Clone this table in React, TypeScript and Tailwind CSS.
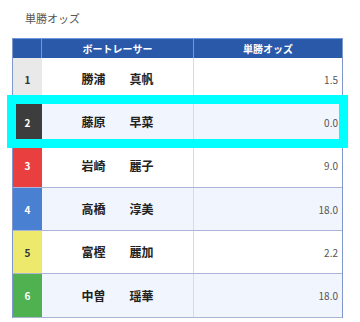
type Racer = {
	no: number
	name: string
	odds: string
	cell: string
}

const racers: Racer[] = [
	{ no: 1, name: '勝浦　　真帆', odds: '1.5', cell: 'bg-[#e9e9e9] text-[#333]' },
	{ no: 2, name: '藤原　　早菜', odds: '0.0', cell: 'bg-[#3d3d3d] text-white' },
	{ no: 3, name: '岩崎　　麗子', odds: '9.0', cell: 'bg-[#ea3f3f] text-white' },
	{ no: 4, name: '高橋　　淳美', odds: '18.0', cell: 'bg-[#4a80d2] text-white' },
	{ no: 5, name: '富樫　　麗加', odds: '2.2', cell: 'bg-[#ece96c] text-[#333]' },
	{ no: 6, name: '中曽　　瑶華', odds: '18.0', cell: 'bg-[#4fb14f] text-white' },
]

export default function App() {
	return (
		<div
			className="relative h-[322px] w-[360px] overflow-hidden bg-white"
			style={{ fontFamily: '"Noto Sans CJK JP", "Noto Sans", sans-serif' }}
		>
			<p className="pl-[25px] pt-[10px] text-[11px] leading-[16px] text-[#555]">単勝オッズ</p>

			<div className="mx-[12px] mt-[12px] w-[331px] border-x border-[#7f97cc]">
				<div className="grid h-[20px] grid-cols-[29px_152px_148px] border-t border-[#6e9be0] bg-[#2a59a9] text-[10px] font-bold leading-[19px] text-white">
					<div className="border-r border-[#6e9be0]" />
					<div className="border-r border-[#6e9be0] text-center">ボートレーサー</div>
					<div className="text-center">単勝オッズ</div>
				</div>

				{racers.map((r, i) => (
					<div
						key={r.no}
						className={`grid h-[43.3px] grid-cols-[29px_152px_148px] border-b border-[#a9b4d6] ${
							i % 2 === 1 ? 'bg-[#f1f5fd]' : 'bg-white'
						}`}
					>
						<div className={`flex items-center justify-center text-[10px] font-bold ${r.cell}`}>{r.no}</div>
						<div className="flex items-center justify-center border-r border-[#d7dbe5] text-[12px] font-bold text-[#222]">
							{r.name}
						</div>
						<div className="flex items-center justify-end pr-[4px] text-[10px] text-[#555]">{r.odds}</div>
					</div>
				))}
			</div>

			{/* highlight over row 2 */}
			<div className="absolute left-[7px] top-[95px] h-[53px] w-[341px] border-[9px] border-[#00ffff]" />
		</div>
	)
}
